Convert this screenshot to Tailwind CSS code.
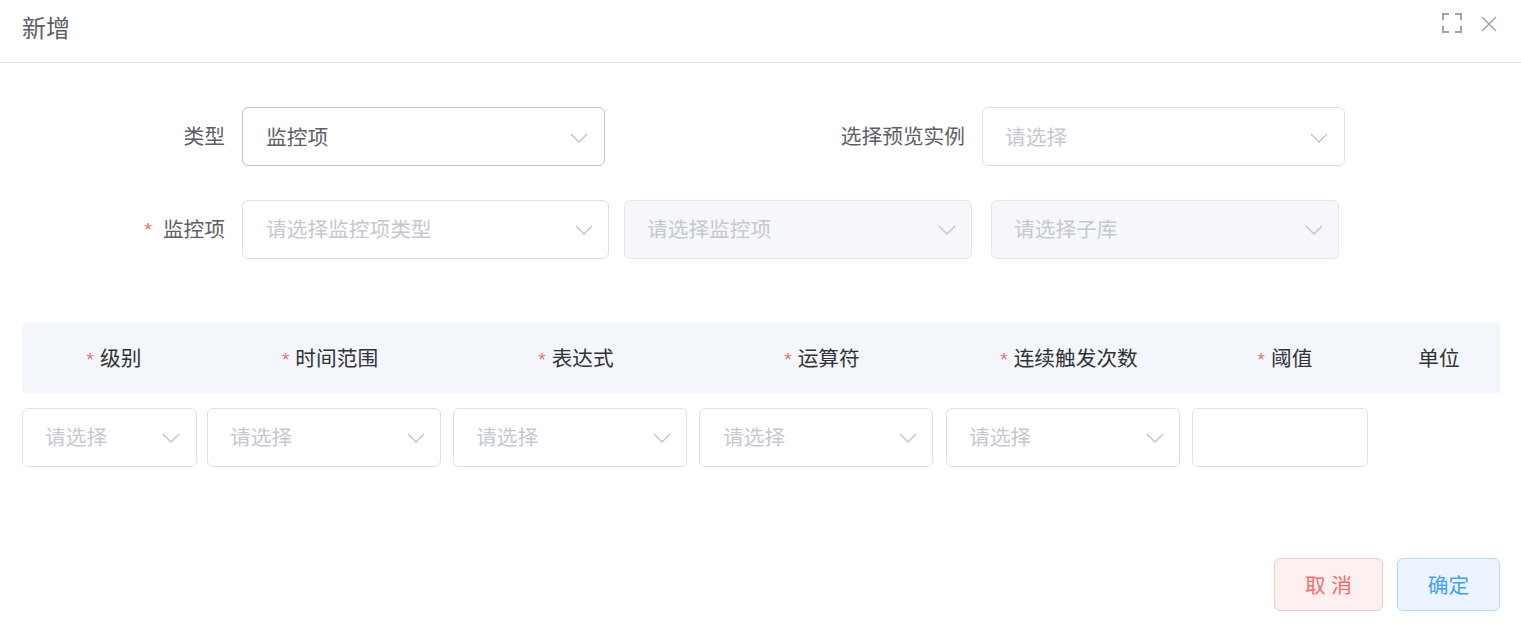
<!doctype html>
<html lang="zh-CN">
<head>
<meta charset="utf-8">
<script src="https://cdn.jsdelivr.net/npm/@tailwindcss/browser@4"></script>
</head>
<body class="bg-white overflow-hidden font-['Liberation_Sans','Noto_Sans_CJK_SC',sans-serif]">
<div class="w-[1521px] h-[636px] flex flex-col">
  <!-- Header -->
  <div class="h-[63px] shrink-0 border-b border-[#e0e0ea] pl-[22px] pr-[23px] flex justify-between">
    <div class="text-[24px] leading-[58px] text-[#5e5e66]">新增</div>
    <div class="flex gap-[18px] pt-[13px] h-[36px] items-start">
      <svg width="20" height="20" viewBox="0 0 20 20" fill="none" stroke="#a3a3aa" stroke-width="2"><path d="M1 7V1h6M13 1h6v6M19 13v6h-6M7 19H1v-6"/></svg>
      <svg width="18" height="18" viewBox="0 0 18 18" fill="none" stroke="#a0a4b0" stroke-width="1.5" class="mt-[2px]"><path d="M2 2l14 14M16 2L2 16"/></svg>
    </div>
  </div>

  <!-- Form rows -->
  <div class="pt-[44px] pl-[22px] pr-[21px]">
    <div class="flex h-[59px]">
      <div class="w-[203px] text-right text-[20.7px] leading-[60px] text-[#5e5e66]">类型</div>
      <div class="ml-[17px] w-[363px] h-[59px] rounded-[6px] border border-[#c0c0cc] flex items-center justify-between pl-[23px] pr-[16px] pt-[2px] text-[20.7px] text-[#5e5e66]">
        <span>监控项</span>
        <svg width="18" height="10" viewBox="0 0 18 10" fill="none" stroke="#c4c6d0" stroke-width="1.5" class="mt-[1px]"><path d="M1 1l8 8 8-8"/></svg>
      </div>
      <div class="ml-[236px] w-[124px] whitespace-nowrap text-right text-[20.7px] leading-[60px] text-[#5e5e66] flex justify-end">选择预览实例</div>
      <div class="ml-[17px] w-[363px] h-[59px] rounded-[6px] border border-[#dfdfe8] flex items-center justify-between pl-[22px] pr-[16px] pt-[2px] text-[20.7px] text-[#c5c8d0]">
        <span>请选择</span>
        <svg width="18" height="10" viewBox="0 0 18 10" fill="none" stroke="#c4c6d0" stroke-width="1.5" class="mt-[1px]"><path d="M1 1l8 8 8-8"/></svg>
      </div>
    </div>

    <div class="flex h-[59px] mt-[34px]">
      <div class="w-[203px] flex justify-end items-start text-[20.7px] leading-[59px] text-[#5e5e66]">
        <span class="text-[#f56c6c] text-[19px] mr-[11px]">*</span><span>监控项</span>
      </div>
      <div class="ml-[17px] w-[367px] h-[59px] rounded-[6px] border border-[#dfdfe8] flex items-center justify-between pl-[23px] pr-[15px] text-[20.7px] text-[#c5c8d0]">
        <span>请选择监控项类型</span>
        <svg width="18" height="10" viewBox="0 0 18 10" fill="none" stroke="#c4c6d0" stroke-width="1.5" class="mt-[1px]"><path d="M1 1l8 8 8-8"/></svg>
      </div>
      <div class="ml-[15px] w-[348px] h-[59px] rounded-[6px] border border-[#e4e7ed] bg-[#f5f7fa] flex items-center justify-between pl-[22px] pr-[15px] text-[20.7px] text-[#c5c8d0]">
        <span>请选择监控项</span>
        <svg width="18" height="10" viewBox="0 0 18 10" fill="none" stroke="#c4c6d0" stroke-width="1.5" class="mt-[1px]"><path d="M1 1l8 8 8-8"/></svg>
      </div>
      <div class="ml-[19px] w-[348px] h-[59px] rounded-[6px] border border-[#e4e7ed] bg-[#f5f7fa] flex items-center justify-between pl-[22px] pr-[15px] text-[20.7px] text-[#c5c8d0]">
        <span>请选择子库</span>
        <svg width="18" height="10" viewBox="0 0 18 10" fill="none" stroke="#c4c6d0" stroke-width="1.5" class="mt-[1px]"><path d="M1 1l8 8 8-8"/></svg>
      </div>
    </div>

    <!-- Table head -->
    <div class="mt-[64px] h-[70px] w-[1478px] bg-[#f3f6fb] flex items-center pt-[2px] text-[20.7px] text-[#303133]">
      <div class="w-[184px] text-center"><span class="text-[#f56c6c] text-[19px] mr-[6px]">*</span>级别</div>
      <div class="w-[248px] text-center"><span class="text-[#f56c6c] text-[19px] mr-[6px]">*</span>时间范围</div>
      <div class="w-[244px] text-center"><span class="text-[#f56c6c] text-[19px] mr-[6px]">*</span>表达式</div>
      <div class="w-[248px] text-center"><span class="text-[#f56c6c] text-[19px] mr-[6px]">*</span>运算符</div>
      <div class="w-[246px] text-center"><span class="text-[#f56c6c] text-[19px] mr-[6px]">*</span>连续触发次数</div>
      <div class="w-[186px] text-center"><span class="text-[#f56c6c] text-[19px] mr-[6px]">*</span>阈值</div>
      <div class="w-[122px] text-center">单位</div>
    </div>

    <!-- Table row -->
    <div class="mt-[15px] flex h-[59px] text-[20.7px] text-[#c5c8d0]">
      <div class="w-[175px] h-[59px] rounded-[6px] border border-[#dfdfe8] flex items-center justify-between pl-[22px] pr-[16px]">
        <span>请选择</span>
        <svg width="18" height="10" viewBox="0 0 18 10" fill="none" stroke="#c4c6d0" stroke-width="1.5" class="mt-[1px]"><path d="M1 1l8 8 8-8"/></svg>
      </div>
      <div class="ml-[10px] w-[234px] h-[59px] rounded-[6px] border border-[#dfdfe8] flex items-center justify-between pl-[22px] pr-[15px]">
        <span>请选择</span>
        <svg width="18" height="10" viewBox="0 0 18 10" fill="none" stroke="#c4c6d0" stroke-width="1.5" class="mt-[1px]"><path d="M1 1l8 8 8-8"/></svg>
      </div>
      <div class="ml-[12px] w-[234px] h-[59px] rounded-[6px] border border-[#dfdfe8] flex items-center justify-between pl-[22px] pr-[15px]">
        <span>请选择</span>
        <svg width="18" height="10" viewBox="0 0 18 10" fill="none" stroke="#c4c6d0" stroke-width="1.5" class="mt-[1px]"><path d="M1 1l8 8 8-8"/></svg>
      </div>
      <div class="ml-[12px] w-[234px] h-[59px] rounded-[6px] border border-[#dfdfe8] flex items-center justify-between pl-[23px] pr-[15px]">
        <span>请选择</span>
        <svg width="18" height="10" viewBox="0 0 18 10" fill="none" stroke="#c4c6d0" stroke-width="1.5" class="mt-[1px]"><path d="M1 1l8 8 8-8"/></svg>
      </div>
      <div class="ml-[13px] w-[234px] h-[59px] rounded-[6px] border border-[#dfdfe8] flex items-center justify-between pl-[22px] pr-[15px]">
        <span>请选择</span>
        <svg width="18" height="10" viewBox="0 0 18 10" fill="none" stroke="#c4c6d0" stroke-width="1.5" class="mt-[1px]"><path d="M1 1l8 8 8-8"/></svg>
      </div>
      <div class="ml-[12px] w-[176px] h-[59px] rounded-[6px] border border-[#dfdfe8]"></div>
    </div>

    <!-- Footer -->
    <div class="mt-[91px] w-[1478px] flex justify-end gap-[14px] text-[20.7px]">
      <div class="w-[109px] h-[53px] rounded-[6px] border border-[#fcc4c4] bg-[#fef0f0] text-[#f56c6c] flex items-center justify-center pt-[2px]">取 消</div>
      <div class="w-[103px] h-[53px] rounded-[6px] border border-[#b3d8ff] bg-[#ecf5ff] text-[#409eff] flex items-center justify-center pt-[2px]">确定</div>
    </div>
  </div>
</div>
</body>
</html>
